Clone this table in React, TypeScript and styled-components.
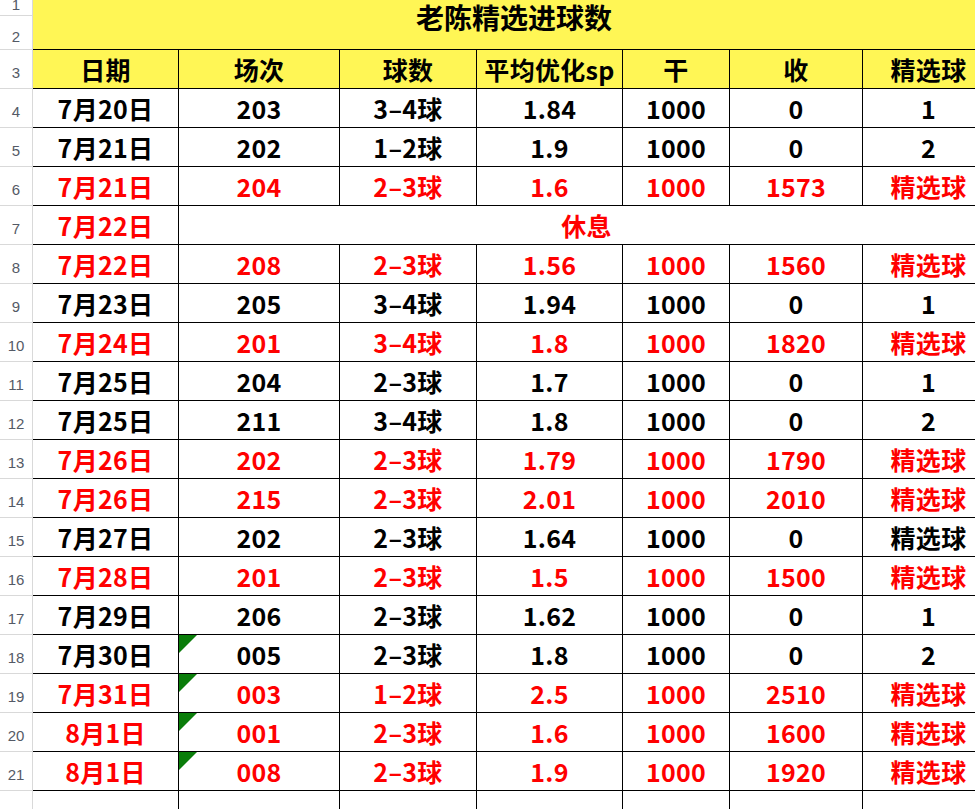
import React from "react";
import styled, { createGlobalStyle } from "styled-components";

const GlobalStyle = createGlobalStyle`
  html, body {
    margin: 0;
    padding: 0;
    background: #ffffff;
    overflow: hidden;
  }
  #root {
    width: 975px;
    height: 809px;
    overflow: hidden;
  }
`;

const YELLOW = "#FFF655";
const RED = "#FF0000";

const Sheet = styled.div`
  display: grid;
  grid-template-columns: 33px 146px 161px 137px 146px 107px 133px 132px;
  grid-template-rows: 16px 34px repeat(20, 39px);
  width: 995px;
  font-family: "Noto Sans CJK SC", "Noto Sans", sans-serif;
`;

const RowNum = styled.div<{ $top?: boolean }>`
  grid-column: 1;
  display: flex;
  justify-content: center;
  align-items: ${(p) => (p.$top ? "flex-end" : "center")};
  padding-top: ${(p) => (p.$top ? "0" : "7px")};
  padding-bottom: ${(p) => (p.$top ? "3px" : "0")};
  box-sizing: border-box;
  border-right: 1px solid #d9d9d9;
  border-bottom: 1px solid #d9d9d9;
  color: #545a66;
  font-family: "Liberation Sans", Arial, sans-serif;
  font-size: 15px;
  line-height: 1;
  background: #fff;
`;

const Title = styled.div`
  grid-column: 2 / 9;
  grid-row: 1 / 3;
  background: ${YELLOW};
  border-bottom: 1px solid #000;
  box-sizing: border-box;
  display: flex;
  justify-content: center;
  align-items: flex-start;
  padding-top: 2px;
  font-size: 28px;
  line-height: 30px;
  font-weight: 700;
  color: #000;
`;

const Cell = styled.div<{ $head?: boolean; $red?: boolean; $span?: number }>`
  position: relative;
  grid-column: ${(p) => (p.$span ? `span ${p.$span}` : "auto")};
  display: flex;
  justify-content: center;
  align-items: center;
  padding-top: 1px;
  box-sizing: border-box;
  border-right: 1px solid #000;
  border-bottom: 1px solid #000;
  background: ${(p) => (p.$head ? YELLOW : "#fff")};
  color: ${(p) => (p.$red ? RED : "#000")};
  font-size: 25px;
  font-weight: 700;
  line-height: 1;
  letter-spacing: 0.3px;
  white-space: nowrap;
`;

const Flag = styled.span`
  position: absolute;
  left: 0;
  top: 0;
  width: 0;
  height: 0;
  border-top: 18px solid #0a7d0a;
  border-right: 18px solid transparent;
`;

type Row = {
  d: string;
  c: string;
  b: string;
  sp: string;
  g: string;
  s: string;
  j: string;
  red: boolean;
  flag?: boolean;
};

const rows: (Row | { rest: true; d: string })[] = [
  { d: "7月20日", c: "203", b: "3–4球", sp: "1.84", g: "1000", s: "0", j: "1", red: false },
  { d: "7月21日", c: "202", b: "1–2球", sp: "1.9", g: "1000", s: "0", j: "2", red: false },
  { d: "7月21日", c: "204", b: "2–3球", sp: "1.6", g: "1000", s: "1573", j: "精选球", red: true },
  { rest: true, d: "7月22日" },
  { d: "7月22日", c: "208", b: "2–3球", sp: "1.56", g: "1000", s: "1560", j: "精选球", red: true },
  { d: "7月23日", c: "205", b: "3–4球", sp: "1.94", g: "1000", s: "0", j: "1", red: false },
  { d: "7月24日", c: "201", b: "3–4球", sp: "1.8", g: "1000", s: "1820", j: "精选球", red: true },
  { d: "7月25日", c: "204", b: "2–3球", sp: "1.7", g: "1000", s: "0", j: "1", red: false },
  { d: "7月25日", c: "211", b: "3–4球", sp: "1.8", g: "1000", s: "0", j: "2", red: false },
  { d: "7月26日", c: "202", b: "2–3球", sp: "1.79", g: "1000", s: "1790", j: "精选球", red: true },
  { d: "7月26日", c: "215", b: "2–3球", sp: "2.01", g: "1000", s: "2010", j: "精选球", red: true },
  { d: "7月27日", c: "202", b: "2–3球", sp: "1.64", g: "1000", s: "0", j: "精选球", red: false },
  { d: "7月28日", c: "201", b: "2–3球", sp: "1.5", g: "1000", s: "1500", j: "精选球", red: true },
  { d: "7月29日", c: "206", b: "2–3球", sp: "1.62", g: "1000", s: "0", j: "1", red: false },
  { d: "7月30日", c: "005", b: "2–3球", sp: "1.8", g: "1000", s: "0", j: "2", red: false, flag: true },
  { d: "7月31日", c: "003", b: "1–2球", sp: "2.5", g: "1000", s: "2510", j: "精选球", red: true, flag: true },
  { d: "8月1日", c: "001", b: "2–3球", sp: "1.6", g: "1000", s: "1600", j: "精选球", red: true, flag: true },
  { d: "8月1日", c: "008", b: "2–3球", sp: "1.9", g: "1000", s: "1920", j: "精选球", red: true, flag: true },
];

const headers = ["日期", "场次", "球数", "平均优化sp", "干", "收", "精选球"];

export default function App() {
  return (
    <>
      <GlobalStyle />
      <Sheet>
        <RowNum $top>1</RowNum>
        <Title>老陈精选进球数</Title>
        <RowNum>2</RowNum>
        <RowNum>3</RowNum>
        {headers.map((h) => (
          <Cell key={h} $head>
            {h}
          </Cell>
        ))}
        {rows.map((r, i) => {
          const n = i + 4;
          if ("rest" in r) {
            return (
              <React.Fragment key={n}>
                <RowNum>{n}</RowNum>
                <Cell $red>{r.d}</Cell>
                <Cell $red $span={6}>
                  休息
                </Cell>
              </React.Fragment>
            );
          }
          return (
            <React.Fragment key={n}>
              <RowNum>{n}</RowNum>
              <Cell $red={r.red}>{r.d}</Cell>
              <Cell $red={r.red}>
                {r.flag && <Flag />}
                {r.c}
              </Cell>
              <Cell $red={r.red}>{r.b}</Cell>
              <Cell $red={r.red}>{r.sp}</Cell>
              <Cell $red={r.red}>{r.g}</Cell>
              <Cell $red={r.red}>{r.s}</Cell>
              <Cell $red={r.red}>{r.j}</Cell>
            </React.Fragment>
          );
        })}
        <RowNum>22</RowNum>
        {Array.from({ length: 7 }).map((_, k) => (
          <Cell key={k} />
        ))}
      </Sheet>
    </>
  );
}
